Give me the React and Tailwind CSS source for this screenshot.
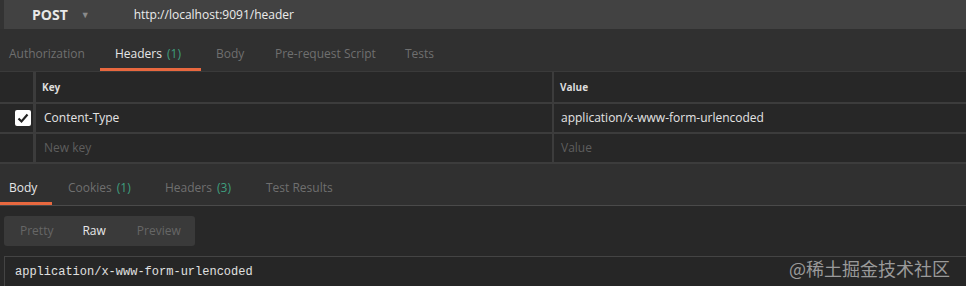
import React from 'react';

const Tab = ({ label, count, active, className }) => (
  <div className={`relative h-full flex items-center ${className}`}>
    <span className={active ? 'text-[#e6e6e6]' : 'text-[#6f6f6f]'}>{label}</span>
    {count && <span className="ml-[5px] text-[#3f9e7e]">({count})</span>}
    {active && <div className="absolute left-0 right-0 bottom-0 h-[3px] bg-[#e8683f]" />}
  </div>
);

const App = () => {
  return (
    <div
      className="relative w-[966px] h-[286px] overflow-hidden bg-[#282828] text-[12px]"
      style={{ fontFamily: '"Open Sans", "Noto Sans", sans-serif' }}
    >
      {/* URL bar */}
      <div className="h-[29px] pl-[4px] bg-[#333333]">
        <div className="h-full bg-[#424242] flex items-center">
          <span className="ml-[28px] font-bold text-[14px] text-[#e8e8e8]">POST</span>
          <span className="ml-[13px] text-[9px] text-[#8a8a8a]">▼</span>
          <span className="ml-[44px] text-[12px] text-[#ececec]">http://localhost:9091/header</span>
        </div>
      </div>

      {/* Request tabs */}
      <div className="h-[42px] bg-[#303030] flex">
        <Tab label="Authorization" className="w-[100px] pl-[9px] pt-[8px]" />
        <Tab label="Headers" count="1" active className="w-[101px] pl-[15px] pt-[8px]" />
        <Tab label="Body" className="w-[59px] pl-[15px] pt-[8px]" />
        <Tab label="Pre-request Script" className="w-[130px] pl-[15px] pt-[8px]" />
        <Tab label="Tests" className="pl-[15px] pt-[8px]" />
      </div>

      {/* Headers table */}
      <div className="bg-[#272727] border-t border-[#3a3a3a]">
        <div className="flex h-[32px] border-b-2 border-[#3c3c3c]">
          <div className="w-[36px] border-r-[3px] border-[#3c3c3c]" />
          <div className="w-[518px] border-r-2 border-[#3c3c3c] pl-[6px] flex items-center font-bold text-[10px] text-[#dcdcdc]">Key</div>
          <div className="flex-1 pl-[6px] flex items-center font-bold text-[10px] text-[#dcdcdc]">Value</div>
        </div>
        <div className="flex h-[30px] border-b-2 border-[#3c3c3c]">
          <div className="w-[36px] border-r-[3px] border-[#3c3c3c] flex items-center pl-[15px]">
            <div className="w-[16px] h-[16px] rounded-[2px] bg-white flex items-center justify-center">
              <svg width="12" height="12" viewBox="0 0 12 12">
                <path d="M1.5 6.5 L4.5 9.5 L10.5 2.5" fill="none" stroke="#222" strokeWidth="2.2" />
              </svg>
            </div>
          </div>
          <div className="w-[518px] border-r-2 border-[#3c3c3c] pl-[8px] flex items-center text-[#e4e4e4]">Content-Type</div>
          <div className="flex-1 pl-[7px] flex items-center text-[#e4e4e4]">application/x-www-form-urlencoded</div>
        </div>
        <div className="flex h-[30px] border-b-2 border-[#3c3c3c]">
          <div className="w-[36px] border-r-[3px] border-[#3c3c3c]" />
          <div className="w-[518px] border-r-2 border-[#3c3c3c] pl-[8px] flex items-center text-[#5e5e5e]">New key</div>
          <div className="flex-1 pl-[7px] flex items-center text-[#5e5e5e]">Value</div>
        </div>
      </div>

      {/* Response tabs */}
      <div className="h-[42px] bg-[#303030] flex border-b border-[#4a4a4a]">
        <Tab label="Body" active className="w-[52px] pl-[9px] pt-[6px]" />
        <Tab label="Cookies" count="1" className="w-[98px] pl-[16px] pt-[6px]" />
        <Tab label="Headers" count="3" className="w-[101px] pl-[15px] pt-[6px]" />
        <Tab label="Test Results" className="pl-[15px] pt-[6px]" />
      </div>

      {/* Body view toggle */}
      <div className="h-[50px] pl-[4px] pt-[10px]">
        <div className="w-[191px] h-[30px] rounded-[3px] bg-[#3a3a3a] flex items-center text-[12px]">
          <span className="ml-[16px] text-[#666666]">Pretty</span>
          <span className="ml-[29px] text-[#e8e8e8]">Raw</span>
          <span className="ml-[31px] text-[#666666]">Preview</span>
        </div>
      </div>

      {/* Raw body */}
      <div className="ml-[4px] h-[40px] border-t border-l border-[#444444] bg-[#262626] pl-[10px] pt-[5px]">
        <span
          className="text-[12px] text-[#e0e0e0]"
          style={{ fontFamily: '"Liberation Mono", monospace' }}
        >
          application/x-www-form-urlencoded
        </span>
      </div>

      <div
        className="absolute right-[16px] bottom-[4px] text-[18px] text-[#9a9a9a]"
        style={{ fontFamily: '"Noto Sans CJK SC", "Noto Sans", sans-serif' }}
      >
        @稀土掘金技术社区
      </div>
    </div>
  );
};

export default App;
